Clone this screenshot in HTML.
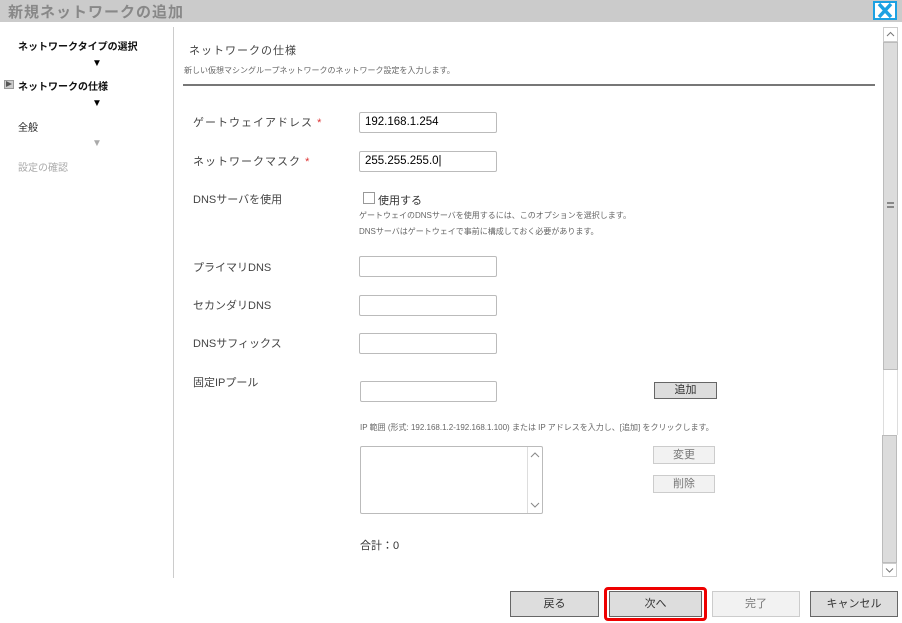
<!DOCTYPE html>
<html><head><meta charset="utf-8"><style>
*{box-sizing:border-box;margin:0;padding:0}
body{width:902px;height:623px;background:#fff;position:relative;overflow:hidden;font-family:"Liberation Sans","Noto Sans CJK JP",sans-serif;color:#333}
.a{position:absolute;white-space:nowrap}
.title{left:0;top:0;width:902px;height:22px;background:#cbcbcb}
.close{left:873px;top:1px;width:24px;height:19px;border:2px solid #1ba1e2;background:#fff}
.in{position:absolute;height:21px;border:1px solid #bbb;border-radius:2px;background:#fff;font-size:11.5px;padding:3px 5px;color:#000}
.lbl{font-size:11px;color:#444;letter-spacing:1px}
.btn{position:absolute;border:1px solid #999;background:#ddd;font-size:11px;text-align:center;color:#333}
.btnd{border-color:#ccc;background:#f2f2f2;color:#777}
</style></head><body>
<div class="a title"></div>
<div class="a" style="left:8px;top:1px;font-size:15px;font-weight:bold;color:#888;letter-spacing:1px">新規ネットワークの追加</div>
<div class="a close"><svg width="20" height="15" viewBox="0 0 20 15"><path d="M4 1 L16 14 M16 1 L4 14" stroke="#1ba1e2" stroke-width="3.5"/></svg></div>

<div class="a" style="left:18px;top:38px;font-size:10px;font-weight:bold;color:#111">ネットワークタイプの選択</div>
<div class="a" style="left:92px;top:58px;font-size:10px;color:#000">▼</div>
<div class="a" style="left:4px;top:80px;width:10px;height:9px;background:#ccc;border:1px solid #999"></div>
<div class="a" style="left:6px;top:81px;width:0;height:0;border-left:6px solid #555;border-top:3.5px solid transparent;border-bottom:3.5px solid transparent"></div>
<div class="a" style="left:18px;top:78px;font-size:10px;font-weight:bold;color:#111">ネットワークの仕様</div>
<div class="a" style="left:92px;top:98px;font-size:10px;color:#000">▼</div>
<div class="a" style="left:18px;top:119px;font-size:10px;color:#222">全般</div>
<div class="a" style="left:92px;top:138px;font-size:10px;color:#aaa">▼</div>
<div class="a" style="left:18px;top:159px;font-size:10px;color:#aaa">設定の確認</div>
<div class="a" style="left:173px;top:27px;width:1px;height:551px;background:#ccc"></div>

<div class="a" style="left:189px;top:42px;font-size:11px;color:#444;letter-spacing:1px">ネットワークの仕様</div>
<div class="a" style="left:184px;top:65px;font-size:8px;color:#666">新しい仮想マシングループネットワークのネットワーク設定を入力します。</div>
<div class="a" style="left:183px;top:84px;width:692px;height:2px;background:#777"></div>

<div class="a lbl" style="left:193px;top:114px">ゲートウェイアドレス <span style="color:#d33">*</span></div>
<div class="in" style="left:359px;top:112px;width:138px">192.168.1.254</div>
<div class="a lbl" style="left:193px;top:153px">ネットワークマスク <span style="color:#d33">*</span></div>
<div class="in" style="left:359px;top:151px;width:138px">255.255.255.0|</div>
<div class="a lbl" style="left:193px;top:191px;letter-spacing:0">DNSサーバを使用</div>
<div class="a" style="left:363px;top:192px;width:12px;height:12px;border:1px solid #999"></div>
<div class="a" style="left:378px;top:192px;font-size:11px;color:#333">使用する</div>
<div class="a" style="left:359px;top:210px;font-size:8px;color:#666">ゲートウェイのDNSサーバを使用するには、このオプションを選択します。</div>
<div class="a" style="left:359px;top:226px;font-size:8px;color:#666">DNSサーバはゲートウェイで事前に構成しておく必要があります。</div>

<div class="a lbl" style="left:193px;top:259px;letter-spacing:0">プライマリDNS</div>
<div class="in" style="left:359px;top:256px;width:138px"></div>
<div class="a lbl" style="left:193px;top:297px;letter-spacing:0">セカンダリDNS</div>
<div class="in" style="left:359px;top:295px;width:138px"></div>
<div class="a lbl" style="left:193px;top:335px;letter-spacing:0">DNSサフィックス</div>
<div class="in" style="left:359px;top:333px;width:138px"></div>
<div class="a lbl" style="left:193px;top:374px;letter-spacing:0">固定IPプール</div>
<div class="in" style="left:360px;top:381px;width:137px"></div>
<div class="btn" style="left:654px;top:382px;width:63px;height:17px;line-height:15px;background:#ddd;border-color:#666">追加</div>
<div class="a" style="left:360px;top:422px;font-size:8px;color:#666">IP 範囲 (形式: 192.168.1.2-192.168.1.100) または IP アドレスを入力し、[追加] をクリックします。</div>
<div class="a" style="left:360px;top:446px;width:183px;height:68px;border:1px solid #bbb;border-radius:2px"></div>
<div class="a" style="left:527px;top:447px;width:15px;height:66px;border-left:1px solid #ddd"></div>
<svg class="a" style="left:528px;top:450px" width="14" height="10"><path d="M3 7 L7 3 L11 7" stroke="#888" fill="none"/></svg>
<svg class="a" style="left:528px;top:500px" width="14" height="10"><path d="M3 3 L7 7 L11 3" stroke="#888" fill="none"/></svg>
<div class="btn btnd" style="left:653px;top:446px;width:62px;height:18px;line-height:16px">変更</div>
<div class="btn btnd" style="left:653px;top:475px;width:62px;height:18px;line-height:16px">削除</div>
<div class="a" style="left:360px;top:537px;font-size:11px;color:#333">合計：0</div>

<div class="a" style="left:883px;top:27px;width:15px;height:15px;border:1px solid #ccc"></div>
<svg class="a" style="left:884px;top:29px" width="13" height="10"><path d="M3 7 L6.5 3.5 L10 7" stroke="#777" fill="none"/></svg>
<div class="a" style="left:883px;top:42px;width:15px;height:328px;background:#dcdcdc;border:1px solid #bbb"></div>
<div class="a" style="left:887px;top:202px;width:7px;height:6px;border-top:2px solid #888;border-bottom:2px solid #888"></div>
<div class="a" style="left:883px;top:370px;width:15px;height:65px;border-left:1px solid #ddd;border-right:1px solid #ddd"></div>
<div class="a" style="left:882px;top:435px;width:15px;height:128px;background:#dcdcdc;border:1px solid #bbb"></div>
<div class="a" style="left:882px;top:563px;width:15px;height:14px;border:1px solid #ccc"></div>
<svg class="a" style="left:883px;top:565px" width="13" height="10"><path d="M3 3.5 L6.5 7 L10 3.5" stroke="#777" fill="none"/></svg>

<div class="btn" style="left:510px;top:591px;width:89px;height:26px;line-height:24px;border-color:#666">戻る</div>
<div class="a" style="left:604px;top:587px;width:103px;height:34px;border:3px solid #e00;border-radius:4px"></div>
<div class="btn" style="left:609px;top:591px;width:93px;height:26px;line-height:24px;border-color:#666">次へ</div>
<div class="btn btnd" style="left:712px;top:591px;width:88px;height:26px;line-height:24px">完了</div>
<div class="btn" style="left:810px;top:591px;width:88px;height:26px;line-height:24px;border-color:#666">キャンセル</div>
</body></html>
